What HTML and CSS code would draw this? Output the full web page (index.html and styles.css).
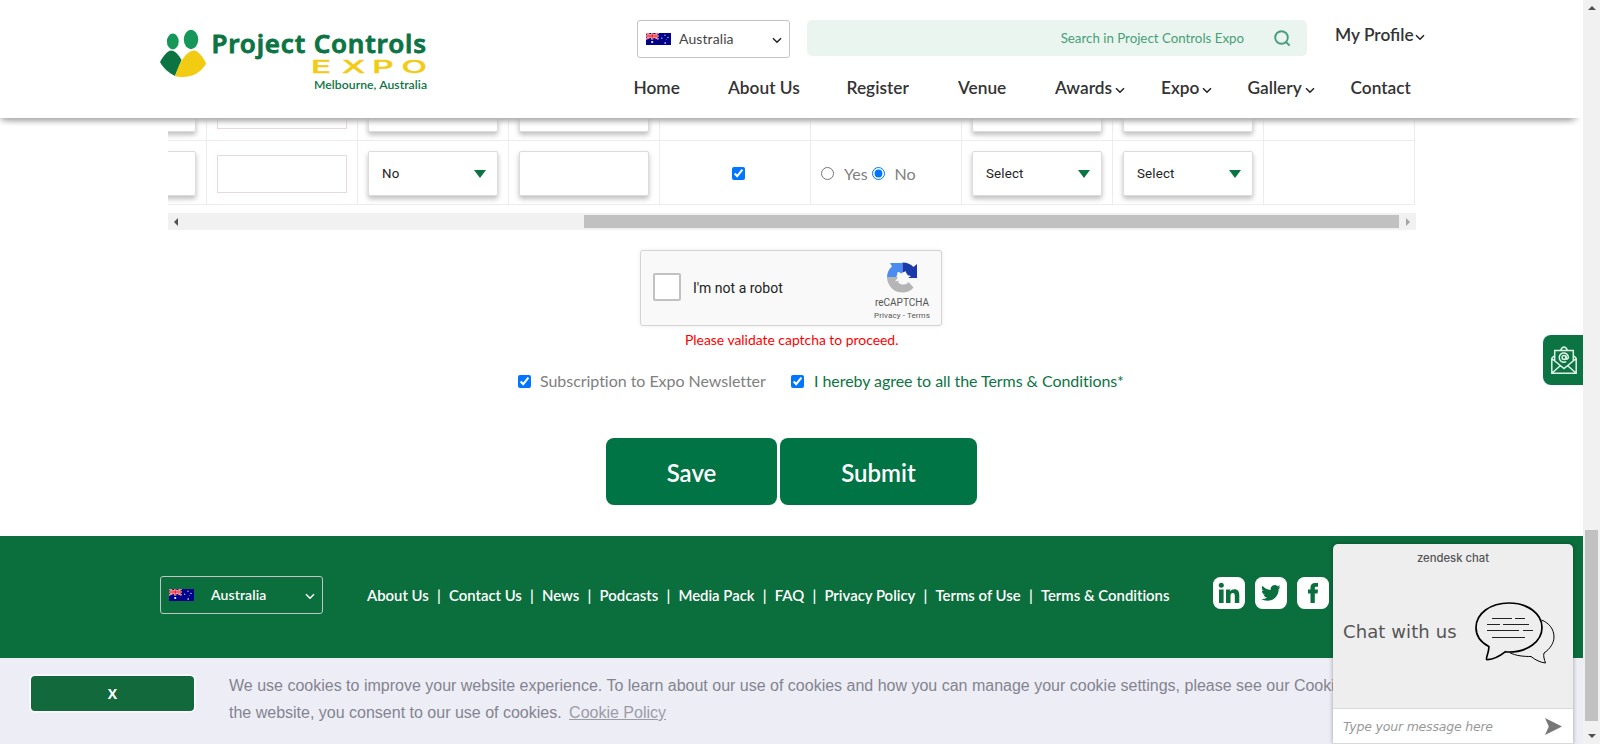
FILE: index.html
```html
<!DOCTYPE html>
<html lang="en">
<head>
<meta charset="utf-8">
<title>Project Controls Expo</title>
<link rel="stylesheet" href="styles.css">
</head>
<body>
<svg width="0" height="0" class="defs" aria-hidden="true">
  <symbol id="chev" viewBox="0 0 10 7"><path d="M1 1.200l4 4 4-4" fill="none" stroke="currentColor" stroke-width="1.500"/></symbol>
  <symbol id="flag" viewBox="0 0 25 12">
    <path fill="#00008b" d="M0 0h25v12H0z"/>
    <path d="M0 0l12.500 6M12.500 0L0 6" stroke="#fff" stroke-width="1.600"/>
    <path d="M0 0l12.500 6M12.500 0L0 6" stroke="#f33" stroke-width=".8"/>
    <path d="M6.200 0v6.500M0 3h12.500" stroke="#fff" stroke-width="2.200"/>
    <path d="M6.200 0v6.500M0 3h12.500" stroke="#f22" stroke-width="1.300"/>
    <g fill="#fff"><circle cx="6.200" cy="9" r="1.100"/><circle cx="19" cy="2.200" r=".6"/><circle cx="15.800" cy="5.200" r=".6"/><circle cx="22" cy="4.400" r=".6"/><circle cx="19.200" cy="10" r=".8"/><circle cx="20.200" cy="6.300" r=".4"/></g>
  </symbol>
</svg>
<div class="window">
  <div class="page">
    <header class="header">
      <svg class="logo" width="270" height="64" viewBox="0 0 270 64">
        <ellipse cx="12.800" cy="11.500" rx="5.900" ry="7.900" fill="#16975a"/>
        <ellipse cx="31" cy="9.500" rx="7.200" ry="9.700" fill="#16975a"/>
        <path d="M0 32C3 26 8 20.500 11 20.500c4 0 8 5 10.500 9.500L15 46C9 43 3 38 0 32z" fill="#0c7443"/>
        <path d="M15 46c2-6 4-11 7-16 3-5 8-9.500 12-9.500 4 0 9 6.500 12.200 13-5 8.500-13.200 13.500-23.200 13.500-3 0-6-.3-8-1z" fill="#f2cb13"/>
        <text class="logo-name" x="51.500" y="23.300" textLength="214.500">Project Controls</text>
        <text class="logo-expo" transform="translate(151 43) scale(1.900 1)" x="0 16.300 32.200 47.700" y="0">EXPO</text>
        <text class="logo-city" x="154" y="59" textLength="113">Melbourne, Australia</text>
      </svg>
      <div class="head-right">
        <div class="head-top">
          <div class="country"><svg width="25" height="12"><use href="#flag"/></svg><span>Australia</span><svg class="chev" width="10" height="7"><use href="#chev"/></svg></div>
          <div class="search"><span>Search in Project Controls Expo</span>
            <svg width="17" height="17" viewBox="0 0 17 17" fill="none" stroke="#46a077" stroke-width="1.900"><circle cx="7.500" cy="7.500" r="6.300"/><path d="M12 12l3.600 3.600"/></svg></div>
          <div class="profile"><span>My Profile</span><svg class="chev" width="10" height="7"><use href="#chev"/></svg></div>
        </div>
        <nav class="nav">
          <a>Home</a><a>About Us</a><a>Register</a><a>Venue</a>
          <a>Awards<svg width="10" height="7"><use href="#chev"/></svg></a>
          <a>Expo<svg width="10" height="7"><use href="#chev"/></svg></a>
          <a>Gallery<svg width="10" height="7"><use href="#chev"/></svg></a>
          <a>Contact</a>
        </nav>
      </div>
    </header>

    <main class="main">
      <div class="table">
        <div class="row row-cut">
          <div class="cell first"><div class="field"></div></div>
          <div class="cell"><div class="plain"></div></div>
          <div class="cell"><div class="field"></div></div>
          <div class="cell"><div class="field"></div></div>
          <div class="cell"></div>
          <div class="cell"></div>
          <div class="cell"><div class="field"></div></div>
          <div class="cell"><div class="field"></div></div>
          <div class="cell"></div>
        </div>
        <div class="row">
          <div class="cell first"><div class="field"></div></div>
          <div class="cell"><div class="plain"></div></div>
          <div class="cell"><div class="field"><span>No</span><i class="tri"></i></div></div>
          <div class="cell"><div class="field"></div></div>
          <div class="cell center"><input type="checkbox" checked></div>
          <div class="cell radios"><input type="radio"><span>Yes</span><input type="radio" checked><span>No</span></div>
          <div class="cell"><div class="field"><span>Select</span><i class="tri"></i></div></div>
          <div class="cell"><div class="field"><span>Select</span><i class="tri"></i></div></div>
          <div class="cell"></div>
        </div>
      </div>
      <div class="hscroll"><i class="arrow-left"></i><div class="hthumb"></div><i class="arrow-right"></i></div>

      <div class="captcha">
        <div class="captcha-box"></div>
        <span class="captcha-label">I'm not a robot</span>
        <div class="captcha-brand">
          <svg width="31" height="31" viewBox="0 0 31 31">
            <path d="M5 4.500L3 1h12.500v11L11 10l-2 6H0C0 11 1.500 7.500 5 4.500z" fill="#4a8cf0"/>
            <path d="M15.500 .5c5 0 8 1.500 11 4.500L30 2v14H19.500l1-4-5-2z" fill="#1c3aa9"/>
            <path d="M0 15h10l3 2-2 3c1.500 2 3 2.500 6 2.500 2 0 3.500-1 4.500-2.500l5 5.500C24 29 20 30.500 15.500 30.500c-6 0-11-3-13.500-8-1.300-2.500-2-5-2-7.500z" fill="#b5b5b5"/>
            <path d="M10.500 10l4.500 1.500 3.500-2.500 1.500 4 4 1-3.500 2.500.5 3.500-3.500-1.500-3.500 3.500-1.500-3.500-4.500 1 3-4z" fill="#f9f9f9"/>
          </svg>
          <span class="brand-name">reCAPTCHA</span>
          <span class="brand-links">Privacy - Terms</span>
        </div>
      </div>
      <p class="error">Please validate captcha to proceed.</p>
      <div class="checks">
        <input type="checkbox" checked><span class="sub">Subscription to Expo Newsletter</span>
        <input type="checkbox" checked><span class="terms">I hereby agree to all the Terms &amp; Conditions*</span>
      </div>
      <div class="buttons"><button class="save">Save</button><button class="submit">Submit</button></div>
    </main>

    <footer class="footer">
      <div class="country foot-country"><svg width="25" height="12"><use href="#flag"/></svg><span>Australia</span><svg class="chev" width="10" height="7"><use href="#chev"/></svg></div>
      <div class="links">
        <a>About Us</a><i>|</i><a>Contact Us</a><i>|</i><a>News</a><i>|</i><a>Podcasts</a><i>|</i><a>Media Pack</a><i>|</i><a>FAQ</a><i>|</i><a>Privacy Policy</a><i>|</i><a>Terms of Use</a><i>|</i><a>Terms &amp; Conditions</a>
      </div>
      <div class="social">
        <svg width="32" height="32" viewBox="0 0 32 32"><rect width="32" height="32" rx="7.500" fill="#fff"/><g fill="#0b6e3d"><circle cx="8.300" cy="8.200" r="2.500"/><path d="M6 12.500h4.600V26H6zM13 12.500h4.300v1.900c.8-1.400 2.200-2.200 4.100-2.200 3.600 0 4.900 2.200 4.900 5.900V26h-4.500v-7c0-1.900-.5-3-2-3-1.600 0-2.300 1.200-2.300 3v7H13z"/></g></svg>
        <svg width="32" height="32" viewBox="0 0 32 32"><rect width="32" height="32" rx="7.500" fill="#fff"/><path transform="translate(6.200 6.200) scale(.81)" fill="#0b6e3d" d="M23.950 4.570a10 10 0 0 1-2.820.770 4.960 4.960 0 0 0 2.160-2.720c-.95.550-2 .950-3.130 1.180a4.920 4.920 0 0 0-8.380 4.480C7.690 8.090 4.070 6.130 1.640 3.160a4.920 4.920 0 0 0 1.520 6.570 4.900 4.900 0 0 1-2.230-.610v.060a4.920 4.920 0 0 0 3.950 4.830 5 5 0 0 1-2.210.080 4.940 4.940 0 0 0 4.600 3.420A9.870 9.870 0 0 1 0 19.540a14 14 0 0 0 7.550 2.210c9.050 0 14-7.500 14-13.980v-.630a10 10 0 0 0 2.400-2.570z"/></svg>
        <svg width="32" height="32" viewBox="0 0 32 32"><rect width="32" height="32" rx="7.500" fill="#fff"/><path fill="#0b6e3d" d="M13.500 26V16.500H11v-4h2.500v-2C13.500 7.500 15.200 6 18 6h3v3.800h-1.900c-1 0-1.300.5-1.300 1.400v1.300H21l-.4 4h-2.800V26z"/></svg>
      </div>
    </footer>

    <div class="cookie">
      <button class="cookie-x">X</button>
      <p>We use cookies to improve your website experience. To learn about our use of cookies and how you can manage your cookie settings, please see our Cookie<br>the website, you consent to our use of cookies. <a>Cookie Policy</a></p>
    </div>

    <div class="mail-tab">
      <svg width="26" height="29" viewBox="0 0 26 29" fill="none" stroke="#dff0e6" stroke-width="1.500">
        <path d="M.8 12v15.200h24.400V12M.8 12l3-2.500M25.200 12l-3-2.500M3.700 14.500V4.500h18.600v10M9.500 4.500C10.500 2 11.500 1 13 1s2.500 1 3.500 3.500M.8 12.500l12.200 10 12.200-10M.8 27.200l9-8M25.200 27.200l-9-8"/>
        <circle cx="13" cy="11.500" r="1.900"/><path d="M15 9.500v2.800c0 1.400 2.400 1 2.400-1a4.600 4.600 0 1 0-2.200 4.200"/>
      </svg>
    </div>

    <div class="chat">
      <div class="chat-brand">zendesk chat</div>
      <div class="chat-body"><span>Chat with us</span>
        <svg width="82" height="64" viewBox="0 0 82 64" fill="none" stroke="#000">
          <path d="M66.500 18C74 21 79 27 79 35c0 6-4 12-10 16-1 3 .5 7 1.500 10-5-.5-10-3-14.500-6.500C49 54.500 41 54 34.500 50.500" stroke-width="1"/>
          <path d="M13.800 44.500C5 40 1 33 1 25.500 1 11.500 15.500 1 34 1s33 10.500 33 24.500S52.500 50 34 50c-1.500 0-3 0-3.500-.3C25 54 18 58 11.500 57.500c-1-.5 3-9 2.300-13z" stroke-width="1.700"/>
          <path d="M17 16.500h20M40 16.500h10M12 22.500h13M28 22.500h26M12 28.500h32M48 28.500h10M17 35.500h33" stroke-width="1" stroke="#222"/>
        </svg>
      </div>
      <div class="chat-input"><span>Type your message here</span><svg width="17" height="17" viewBox="0 0 17 17"><path d="M0 0l17 8.500L0 17l3.800-8.500z" fill="#777"/></svg></div>
    </div>
  </div>
  <div class="vscroll"><i class="arrow-up"></i><div class="vthumb"></div><i class="arrow-down"></i></div>
</div>
</body>
</html>
```
FILE: styles.css
```css
* { box-sizing: border-box; }
body { margin: 0; font-family: Lato, "Liberation Sans", sans-serif; font-variant-ligatures: none; background: #fff; overflow: hidden; }
p { margin: 0; }
input { margin: 0; width: 13px; height: 13px; flex: none; }
button { border: 0; padding: 0; font-family: inherit; color: #fff; }
i { font-style: normal; }
svg { flex: none; display: block; }
.defs { position: absolute; }
.window { display: flex; width: 1600px; height: 744px; }
.page { position: relative; width: 1583px; display: flex; flex-direction: column; overflow: hidden; }

.header { position: relative; z-index: 2; height: 118px; flex: none; display: flex; background: #fff; padding-left: 160px; box-shadow: -6px 8px 6px -6px #aaa, 0 8px 6px -6px #bbb; }
.logo { margin-top: 30px; overflow: visible; }
.logo-name { font: 600 26px "Noto Sans", sans-serif; fill: #0c7443; stroke: #0c7443; stroke-width: .8px; stroke-linejoin: round; }
.logo-expo { font: 500 17.500px/1 Inter, sans-serif; fill: #f2cb13; stroke: #f2cb13; stroke-width: .4px; stroke-linejoin: round; }
.logo-city { font: 600 12.200px Lato, sans-serif; fill: #0c7443; }
.head-right { margin-left: 203px; padding-top: 20px; width: 800px; }
.head-top { display: flex; padding-left: 4px; height: 38px; }
.country { width: 153px; height: 38px; border: 1px solid #c4c4c4; border-radius: 3px; display: flex; align-items: center; padding: 0 7px 0 8px; font-size: 14px; color: #444; }
.country svg { margin-top: -1px; }
.country span { margin: -1px 0 0 8px; letter-spacing: .1px; }
.country .chev { margin: 3px 0 0 auto; color: #222; }
.search { margin-left: 17px; width: 500px; height: 36px; background: #ebf5f0; border-radius: 5px; display: flex; align-items: center; justify-content: flex-end; padding-right: 16px; font-size: 13.300px; color: #46a077; gap: 30px; }
.profile { margin-left: 28px; height: 28px; display: flex; align-items: center; font-size: 17.300px; font-weight: 600; font-variant-ligatures: normal; color: #333; white-space: nowrap; }
.profile .chev { margin: 6px 0 0 1px; color: #222; }
.nav { display: grid; grid-template-columns: 94.500px 118.500px 111.500px 97px 106px 86.500px 103px auto; margin: 19px 0 0 .5px; font-size: 17.300px; font-weight: 600; color: #333; line-height: 22px; }
.nav a { display: flex; align-items: center; white-space: nowrap; }
.nav svg { margin: 4px 0 0 3px; color: #222; }

.main { height: 418px; flex: none; }
.table { margin-left: 168px; width: 1248px; overflow: hidden; }
.row { display: grid; grid-template-columns: 39px repeat(8, 151px); height: 64px; }
.row-cut { margin-top: -41px; }
.cell { border-right: 1px solid #ececec; border-bottom: 1px solid #ececec; padding: 0 10px; display: flex; align-items: center; min-width: 0; }
.cell.first { justify-content: flex-end; }
.cell.center { justify-content: center; padding: 2px 3px 0 10px; }
.field { width: 130px; height: 45px; margin-top: 2px; flex: none; border: 1px solid #dcdcdc; border-radius: 2px; background: #fff; box-shadow: 0 3px 5px rgba(0,0,0,.25); display: flex; align-items: center; justify-content: space-between; padding: 0 11px 0 13px; font: 13.333px Roboto, sans-serif; color: #222; letter-spacing: .15px; }
.plain { width: 130px; height: 38px; margin-top: 2px; border: 1px solid #ead9dc; }
.tri { border: 6px solid transparent; border-top: 8px solid #0c7443; border-bottom: 0; }
.radios { font-size: 16px; color: #808080; }
.radios input { margin-top: 1px; }
.radios span { margin: 2px 4px 0 10px; }

.hscroll { margin: 8px 0 0 168px; width: 1248px; height: 17px; background: #f1f1f1; display: flex; align-items: center; padding: 0 6px; }
.hthumb { margin-left: 406px; width: 815px; height: 13px; background: #c1c1c1; }
.arrow-left { border: 4px solid transparent; border-right-color: #505050; border-left: 0; }
.arrow-right { margin-left: auto; border: 4px solid transparent; border-left-color: #a3a3a3; border-right: 0; }

.captcha { margin: 20px 0 0 640px; width: 302px; height: 76px; background: #f9f9f9; border: 1px solid #d3d3d3; border-radius: 3px; box-shadow: 0 0 4px rgba(0,0,0,.08); display: flex; align-items: center; padding-left: 12px; font-family: Roboto, sans-serif; }
.captcha-box { width: 28px; height: 28px; margin-bottom: 2px; border: 2px solid #c1c1c1; border-radius: 2px; background: #fff; }
.captcha-label { margin-left: 12px; font-size: 14px; color: #222; }
.captcha-brand { margin: 6px 10px 0 auto; width: 58px; display: flex; flex-direction: column; align-items: center; color: #555; }
.brand-name { font-size: 10px; line-height: 12px; margin-top: 4px; }
.brand-links { font-size: 8px; line-height: 10px; margin-top: 2px; letter-spacing: .1px; white-space: nowrap; }
.error { margin: 5px 0 0 685px; font-size: 13.900px; line-height: 18px; color: #f00; }
.checks { margin: 19px 0 0 518px; height: 24px; display: flex; align-items: center; font-size: 16px; color: #808080; white-space: nowrap; }
.checks input { margin-top: 3px; }
.checks span { margin-left: 9px; letter-spacing: -.04px; }
.sub { width: 242px; margin-right: 9px; }
.checks .terms { color: #0c7443; margin-left: 10px; letter-spacing: -.06px; }
.buttons { margin: 46px 0 0 606px; display: flex; gap: 3px; }
.buttons button { height: 67px; border-radius: 8px; background: #007444; font-size: 24px; font-weight: 600; padding-top: 1px; }
.save { width: 171px; }
.submit { width: 197px; }

.footer { height: 122px; flex: none; background: #0b6e3d; display: flex; align-items: flex-start; padding: 40px 0 0 160px; color: #fff; }
.foot-country { width: 163px; color: #fff; font-weight: 600; }
.foot-country span { margin-left: 17px; }
.foot-country .chev { color: #fff; }
.links { margin-left: 44px; width: 846px; height: 38px; display: flex; align-items: center; font-size: 14.900px; font-weight: 600; white-space: nowrap; gap: 8.200px; }
.social { display: flex; gap: 10px; margin-top: 1px; }

.cookie { height: 86px; background: #edeef5; display: flex; padding: 18px 0 0 31px; color: #838391; }
.cookie-x { width: 163px; height: 35px; border-radius: 4px; background: #11693c; box-shadow: 0 0 0 1.500px #fff; font: 700 14px "Open Sans", sans-serif; }
.cookie p { margin: -4px 0 0 35px; font: 16px/27px "Liberation Sans", sans-serif; white-space: nowrap; }
.cookie a { margin-left: 3px; color: #9b9ba8; text-decoration: underline; }

.mail-tab { position: absolute; right: 0; top: 335px; width: 40px; height: 50px; background: #0c7443; border-radius: 8px 0 0 8px; display: flex; align-items: center; padding-left: 8px; }

.chat { position: absolute; z-index: 3; left: 1333px; top: 544px; width: 240px; height: 200px; background: #eee; border-radius: 5px 5px 0 0; box-shadow: 0 0 4px rgba(0,0,0,.35); display: flex; flex-direction: column; font-family: "DejaVu Sans", sans-serif; overflow: hidden; }
.chat-brand { text-align: center; font: 500 11.300px/28px Inter, sans-serif; color: #555; }
.chat-body { flex: 1; display: flex; align-items: center; padding: 0 16px 12px 10px; justify-content: space-between; font-size: 18px; letter-spacing: .1px; color: #555; white-space: nowrap; }
.chat-body span { margin-top: -5px; }
.chat-input { height: 36px; background: #fff; border-top: 1px solid #d8d8d8; border-bottom: 1px solid #d8d8d8; display: flex; align-items: center; justify-content: space-between; padding: 0 11px 0 10px; font-size: 12.500px; letter-spacing: -.2px; font-style: italic; color: #999; }

.vscroll { width: 17px; background: #f1f1f1; display: flex; flex-direction: column; align-items: center; padding: 6px 0; }
.vthumb { margin-top: 520px; width: 13px; height: 191px; background: #c1c1c1; }
.arrow-up { border: 4px solid transparent; border-bottom-color: #505050; border-top: 0; }
.arrow-down { margin-top: auto; border: 4px solid transparent; border-top-color: #505050; border-bottom: 0; }
```
